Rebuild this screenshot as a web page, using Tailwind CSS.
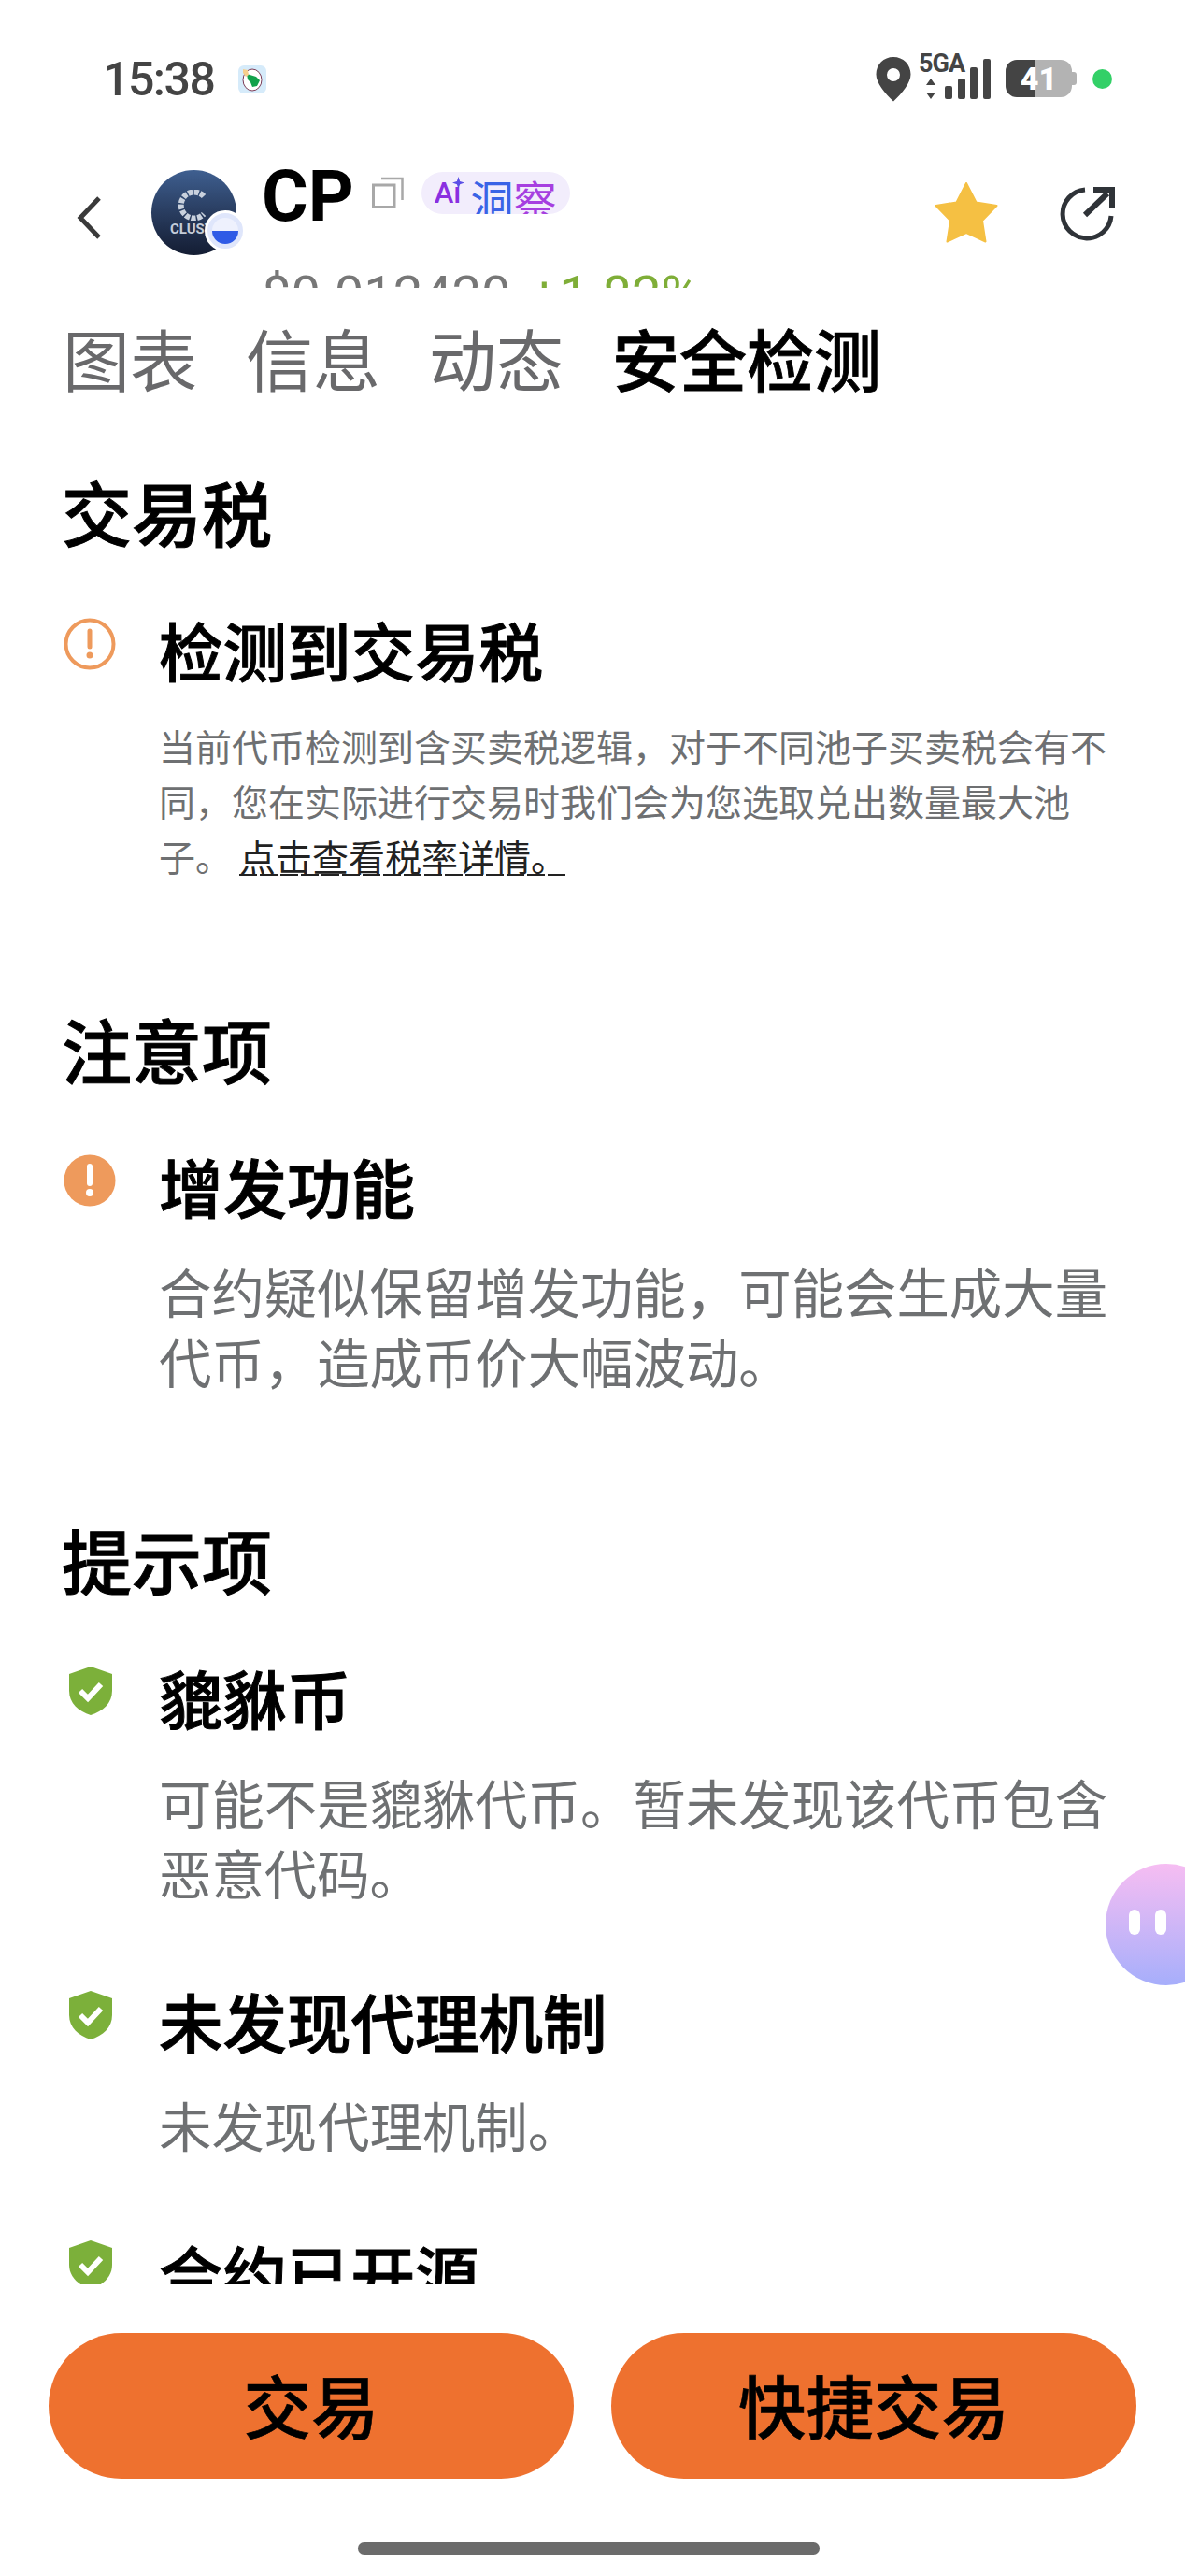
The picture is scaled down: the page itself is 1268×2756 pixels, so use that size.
<!DOCTYPE html>
<html lang="zh">
<head>
    <meta charset="UTF-8">
    <meta name="viewport" content="width=device-width, initial-scale=1.0">
    <title>CP 安全检测</title>
    <script src="https://cdn.jsdelivr.net/npm/@tailwindcss/browser@4"></script>
</head>
<body class="bg-white">
<div class="relative w-[1268px] h-[2756px] overflow-hidden flex flex-col bg-white text-black font-['Noto_Sans_CJK_SC',sans-serif]">

    <!-- status bar -->
    <div class="h-[170px] shrink-0 flex items-start pt-[60px] pl-[110px] pr-[78px]">
        <span class="text-[50px] leading-[50px] font-medium tracking-[-1.5px] text-[#444] font-['Roboto',sans-serif]">15:38</span>
        <svg class="ml-[26px] mt-[10px]" width="30" height="30" viewBox="0 0 30 30">
            <rect width="30" height="30" rx="6" fill="#d6ebfa"/>
            <ellipse cx="15" cy="15.5" rx="10" ry="11.5" fill="#fff" stroke="#7a3b55" stroke-width="1"/>
            <path d="M9 9l10 3 4 4-3 6-5 1-2-5-3-3z" fill="#12a14b"/>
            <path d="M5 4l5 1 1 5-3 2-3-4z" fill="#f6cf8d"/>
        </svg>
        <div class="ml-auto flex items-start">
            <svg class="mt-[1px]" width="38" height="48" viewBox="0 0 38 48">
                <path fill-rule="evenodd" d="M19 0C8.5 0 .5 8 .5 18.500c0 9 9 20 18.500 29 9.500-9 18.500-20 18.500-29C37.500 8 29.500 0 19 0zm0 12a7 7 0 110 14 7 7 0 010-14z" fill="#444"/>
            </svg>
            <div class="relative w-[78px] h-[48px] ml-[8px]">
                <span class="absolute left-0 top-[-6px] text-[27px] leading-[28px] font-bold text-[#444] tracking-[-1px] font-['Roboto',sans-serif]">5GA</span>
                <svg class="absolute left-0 top-0" width="78" height="48" viewBox="0 0 78 48">
                    <path d="M13 24l5 7H8zM13 46l-5-7h10z" fill="#444"/>
                    <rect x="28" y="32" width="8" height="14" rx="2" fill="#444"/>
                    <rect x="42" y="24" width="8" height="22" rx="2" fill="#444"/>
                    <rect x="55" y="12" width="8" height="34" rx="2" fill="#444"/>
                    <rect x="69" y="3" width="8" height="43" rx="2" fill="#444"/>
                </svg>
            </div>
            <div class="relative ml-[15px] mt-[4px] w-[76px] h-[40px] flex">
                <div class="w-[31px] h-full bg-[#444] rounded-l-[12px]"></div>
                <div class="w-[40px] h-full bg-[#b3b3b3] rounded-r-[12px]"></div>
                <div class="w-[5px] h-[14px] mt-[13px] bg-[#b3b3b3] rounded-r-[3px]"></div>
                <span class="absolute left-0 w-[71px] top-0 text-center text-[34px] leading-[40px] font-black text-white font-['Roboto',sans-serif]">41</span>
            </div>
            <div class="ml-[17px] mt-[14px] w-[21px] h-[21px] rounded-full bg-[#33d067]"></div>
        </div>
    </div>

    <!-- token header -->
    <div class="relative h-[138px] shrink-0 overflow-hidden pl-[82px] pr-[88px] flex items-start">
        <svg class="mt-[40px] shrink-0" width="26" height="46" viewBox="0 0 26 46">
            <path d="M24 2L4 23l20 21" fill="none" stroke="#3a3a3a" stroke-width="5"/>
        </svg>
        <div class="relative ml-[54px] mt-[12px] w-[91px] h-[91px] shrink-0">
            <div class="w-full h-full rounded-full bg-gradient-to-b from-[#3f5f90] to-[#141d33] overflow-hidden flex flex-col">
                <svg class="mt-[21px] ml-[29px]" width="31" height="33" viewBox="0 0 31 33">
                    <path d="M27 7A14 14 0 1 0 27 26" fill="none" stroke="#c9d1dd" stroke-width="6" stroke-dasharray="5 1.500"/>
                </svg>
                <span class="mt-[2px] pl-[20px] text-[15px] leading-[15px] font-bold text-[#c4ccd8] font-['Roboto',sans-serif]">CLUST</span>
            </div>
            <div class="absolute left-[57px] top-[43px] w-[44px] h-[44px] rounded-full bg-[#dfe6fb] border-[3px] border-white flex items-center justify-center">
                <div class="w-[28px] h-[28px] rounded-full bg-gradient-to-b from-[#eef1fd] from-50% to-[#2f5be6] to-50%"></div>
            </div>
        </div>
        <div class="ml-[27px]">
            <div class="flex items-start">
                <span class="text-[76px] leading-[76px] mt-[2px] font-bold font-['Roboto',sans-serif]">CP</span>
                <svg class="ml-[19px] mt-[19px]" width="34" height="34" viewBox="0 0 34 34">
                    <rect x="1.500" y="9" width="22.500" height="23.500" fill="none" stroke="#a8a8a8" stroke-width="3"/>
                    <path d="M10 2h22.500v23" fill="none" stroke="#a8a8a8" stroke-width="2.500"/>
                </svg>
                <div class="ml-[19px] mt-[14px] w-[159px] h-[45px] rounded-full bg-[#f2edfc] overflow-hidden flex items-start pl-[14px]">
                    <span class="relative text-[31px] leading-[36px] mt-[5px] font-medium text-[#8a2fe0] font-['Roboto',sans-serif]">Aı
                        <svg class="absolute right-[-4px] top-[0px]" width="13" height="13" viewBox="0 0 12 12"><path d="M6 0l1.500 4.500L12 6 7.500 7.500 6 12 4.500 7.500 0 6l4.500-1.500z" fill="#5a4ee6"/></svg>
                    </span>
                    <span class="ml-[10px] text-[46px] leading-[50px] mt-[3px] text-[#3a63e6]">洞</span>
                    <span class="text-[46px] leading-[50px] mt-[3px] text-[#a63fe0]">察</span>
                </div>
            </div>
            <div class="flex mt-[43px] text-[56px] leading-[50px] font-['Roboto',sans-serif]">
                <span class="text-[#777]">$0.012420</span>
                <span class="ml-[20px] text-[#7fae38]">+1.82%</span>
            </div>
        </div>
        <svg class="absolute left-[1000px] top-[25px]" width="68" height="66" viewBox="0 0 68 66">
            <path d="M34 1l10.500 20.500 22 3.500-15.500 16 3.500 22.500L34 54l-20.500 9.500L17 41 1.500 25l22-3.500z" fill="#f5c043" stroke="#f5c043" stroke-width="2" stroke-linejoin="round"/>
        </svg>
        <svg class="absolute left-[1133px] top-[29px]" width="60" height="60" viewBox="0 0 60 60">
            <path d="M28 4A26 26 0 1 0 56 32" fill="none" stroke="#2f3338" stroke-width="5"/>
            <path d="M28 31L52 8M37 4h20v20" fill="none" stroke="#2f3338" stroke-width="6"/>
        </svg>
    </div>

    <!-- tabs -->
    <div class="h-[154px] shrink-0 flex items-center gap-[52px] pl-[67px] pb-[6px] text-[72px] leading-[90px] text-[#69696b]">
        <span>图表</span>
        <span>信息</span>
        <span>动态</span>
        <span class="text-black font-medium [-webkit-text-stroke:0.8px_#000]">安全检测</span>
    </div>

    <!-- checks -->
    <div class="h-[1982px] shrink-0 overflow-hidden pl-[66px] pr-[75px]">
        <h2 class="mt-[40px] text-[75px] leading-[90px] font-medium [-webkit-text-stroke:1px_#000]">交易税</h2>

        <div class="flex mt-[61px]">
            <svg class="mt-[8px] ml-[2px] shrink-0" width="56" height="56" viewBox="0 0 56 56">
                <circle cx="28" cy="28" r="25.500" fill="none" stroke="#ee9a5c" stroke-width="4"/>
                <path d="M28 14v17" stroke="#ee9a5c" stroke-width="5" stroke-linecap="round"/>
                <circle cx="28" cy="40" r="3.500" fill="#ee9a5c"/>
            </svg>
            <div class="ml-[46px]">
                <h3 class="text-[68.500px] leading-[84px] font-medium [-webkit-text-stroke:1px_#000]">检测到交易税</h3>
                <p class="mt-[31px] text-[39px] leading-[59px] text-[#6e7072]">当前代币检测到含买卖税逻辑，对于不同池子买卖税会有不同，您在实际进行交易时我们会为您选取兑出数量最大池子。<a class="ml-[8px] text-[#222] bg-[repeating-linear-gradient(90deg,#222_0_19px,transparent_19px_22px)] bg-no-repeat bg-[position:0_calc(100%-6px)] bg-[length:100%_2px]">点击查看税率详情。</a></p>
            </div>
        </div>

        <h2 class="mt-[132px] text-[75px] leading-[90px] font-medium [-webkit-text-stroke:1px_#000]">注意项</h2>

        <div class="flex mt-[60px]">
            <svg class="mt-[8px] ml-[2px] shrink-0" width="56" height="56" viewBox="0 0 56 56">
                <circle cx="28" cy="28" r="27.500" fill="#ee9a5c"/>
                <path d="M28 13v18" stroke="#fff" stroke-width="6" stroke-linecap="round"/>
                <circle cx="28" cy="41" r="4" fill="#fff"/>
            </svg>
            <div class="ml-[46px]">
                <h3 class="text-[68.500px] leading-[84px] font-medium [-webkit-text-stroke:1px_#000]">增发功能</h3>
                <p class="mt-[32px] text-[56.400px] leading-[75px] text-[#6e7072]">合约疑似保留增发功能，可能会生成大量代币，造成币价大幅波动。</p>
            </div>
        </div>

        <h2 class="mt-[130px] text-[75px] leading-[90px] font-medium [-webkit-text-stroke:1px_#000]">提示项</h2>

        <div class="flex mt-[61px]">
            <svg class="mt-[9px] ml-[8px] mr-[4px] shrink-0" width="46" height="52" viewBox="0 0 46 52">
                <path d="M23 0L46 8v18c0 13-10 22-23 26C10 48 0 39 0 26V8z" fill="#7cb03a"/>
                <path d="M12 26l8 8 14-15" fill="none" stroke="#fff" stroke-width="6"/>
            </svg>
            <div class="ml-[46px]">
                <h3 class="text-[68.500px] leading-[84px] font-medium [-webkit-text-stroke:1px_#000]">貔貅币</h3>
                <p class="mt-[32px] text-[56.400px] leading-[75px] text-[#6e7072]">可能不是貔貅代币。暂未发现该代币包含恶意代码。</p>
            </div>
        </div>

        <div class="flex mt-[80px]">
            <svg class="mt-[10px] ml-[8px] mr-[4px] shrink-0" width="46" height="52" viewBox="0 0 46 52">
                <path d="M23 0L46 8v18c0 13-10 22-23 26C10 48 0 39 0 26V8z" fill="#7cb03a"/>
                <path d="M12 26l8 8 14-15" fill="none" stroke="#fff" stroke-width="6"/>
            </svg>
            <div class="ml-[46px]">
                <h3 class="text-[68.500px] leading-[84px] font-medium [-webkit-text-stroke:1px_#000]">未发现代理机制</h3>
                <p class="mt-[31px] text-[56.400px] leading-[75px] text-[#6e7072]">未发现代理机制。</p>
            </div>
        </div>

        <div class="flex mt-[80px]">
            <svg class="mt-[7px] ml-[8px] mr-[4px] shrink-0" width="46" height="52" viewBox="0 0 46 52">
                <path d="M23 0L46 8v18c0 13-10 22-23 26C10 48 0 39 0 26V8z" fill="#7cb03a"/>
                <path d="M12 26l8 8 14-15" fill="none" stroke="#fff" stroke-width="6"/>
            </svg>
            <div class="ml-[46px]">
                <h3 class="text-[68.500px] leading-[84px] font-medium [-webkit-text-stroke:1px_#000]">合约已开源</h3>
            </div>
        </div>
    </div>

    <!-- bottom actions -->
    <div class="flex gap-[40px] pl-[52px] mt-[52px]">
        <button class="w-[562px] h-[156px] pb-[4px] rounded-full bg-[#ee712f] text-[72.500px] font-medium text-black [-webkit-text-stroke:0.6px_#000]">交易</button>
        <button class="w-[562px] h-[156px] pb-[4px] rounded-full bg-[#ee712f] text-[72.500px] font-medium text-black [-webkit-text-stroke:0.6px_#000]">快捷交易</button>
    </div>
    <div class="mt-[68px] ml-[383px] w-[494px] h-[13px] rounded-full bg-[#6b6b6b]"></div>

    <!-- floating assistant -->
    <div class="absolute right-0 top-[1994px] w-[85px] h-[130px] overflow-hidden">
        <div class="w-[130px] h-[130px] rounded-full bg-gradient-to-b from-[#f6bdf2] to-[#a6aefb] flex gap-[16px] pl-[25px] pt-[49px]">
            <div class="w-[12px] h-[27px] rounded-full bg-white"></div>
            <div class="w-[12px] h-[27px] rounded-full bg-white"></div>
        </div>
    </div>
</div>
</body>
</html>
